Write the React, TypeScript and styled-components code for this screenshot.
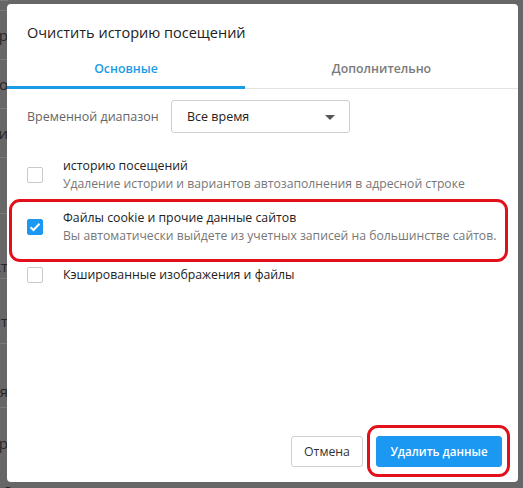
import React from "react";
import styled, { createGlobalStyle, css } from "styled-components";

const GlobalStyle = createGlobalStyle`
  html, body { margin: 0; padding: 0; }
  body {
    width: 523px;
    height: 488px;
    overflow: hidden;
    background: #676767;
    font-family: "Open Sans", "Noto Sans", sans-serif;
  }
`;

const Screen = styled.div`
  position: relative;
  width: 523px;
  height: 488px;
  overflow: hidden;
  background: #676767;
`;

const BackPage = styled.div`
  display: flex;
  flex-direction: column;
  width: 523px;
  height: 488px;
`;

const BackRow = styled.div<{ $h: number; $pad?: number }>`
  display: flex;
  align-items: center;
  height: ${(p) => p.$h}px;
  box-sizing: border-box;
  padding-top: ${(p) => p.$pad ?? 0}px;
  border-top: 1px solid #7a7a7a;
  width: 8px;
  overflow: hidden;
  justify-content: flex-end;
  white-space: nowrap;
  color: #262626;
  font-size: 15px;
`;

const BackFooter = styled.div`
  margin-top: auto;
  height: 6px;
  overflow: hidden;
  white-space: nowrap;
  color: #1e1e1e;
  font-size: 15px;
  line-height: 18px;
  padding-left: 2px;
`;

const Dialog = styled.div`
  position: absolute;
  left: 7px;
  top: 4px;
  width: 511px;
  height: 478px;
  background: #fff;
  border-radius: 4px;
  display: flex;
  flex-direction: column;
`;

const Title = styled.div`
  padding: 19px 20px 0;
  font-size: 14.5px;
  line-height: 20px;
  color: #222;
`;

const TabBar = styled.div`
  display: flex;
  margin-top: 7px;
  border-bottom: 1px solid #e2e2e2;
`;

const Tab = styled.div<{ $active?: boolean; $width?: number }>`
  ${(p) => (p.$width ? css`width: ${p.$width}px;` : css`flex: 1;`)}
  height: 39px;
  box-sizing: border-box;
  margin-bottom: -1px;
  display: flex;
  align-items: center;
  justify-content: center;
  font-size: 12.3px;
  font-weight: 600;
  color: ${(p) => (p.$active ? "#1a9be6" : "#7a7a7a")};
  border-bottom: 3px solid ${(p) => (p.$active ? "#1a9be6" : "transparent")};
`;

const RangeRow = styled.div`
  display: flex;
  align-items: center;
  margin-top: 11px;
  padding: 0 20px;
`;

const RangeLabel = styled.div`
  width: 144px;
  font-size: 12.5px;
  color: #666;
`;

const Select = styled.div`
  position: relative;
  width: 179px;
  height: 33px;
  box-sizing: border-box;
  border: 1px solid #cfcfcf;
  border-radius: 3px;
  display: flex;
  align-items: center;
  padding-left: 15px;
  font-size: 12.5px;
  color: #222;
`;

const Arrow = styled.span`
  position: absolute;
  right: 14px;
  top: 14px;
  width: 0;
  height: 0;
  border-left: 5px solid transparent;
  border-right: 5px solid transparent;
  border-top: 5px solid #555;
`;

const List = styled.div`
  display: flex;
  flex-direction: column;
  margin-top: 16px;
`;

const Row = styled.div<{ $padTop?: number; $highlight?: boolean }>`
  position: relative;
  display: flex;
  align-items: center;
  gap: 20px;
  padding: ${(p) => p.$padTop ?? 8}px 20px 8px;
  ${(p) =>
    p.$highlight &&
    css`
      &::after {
        content: "";
        position: absolute;
        left: 2px;
        right: 10px;
        top: -2px;
        bottom: -9px;
        border: 3px solid #e3101b;
        border-radius: 11px;
        pointer-events: none;
      }
    `}
`;

const Check = styled.span<{ $checked?: boolean }>`
  flex: none;
  width: 16px;
  height: 16px;
  box-sizing: border-box;
  border-radius: 2px;
  border: 1px solid ${(p) => (p.$checked ? "#1a98f2" : "#c9c9c9")};
  background: ${(p) => (p.$checked ? "#1a98f2" : "#fff")};
  display: flex;
  align-items: center;
  justify-content: center;
`;

const RowText = styled.div`
  display: flex;
  flex-direction: column;
  white-space: nowrap;
`;

const RowTitle = styled.div`
  font-size: 12.3px;
  line-height: 18px;
  color: #222;
`;

const RowSub = styled.div`
  font-size: 12.2px;
  line-height: 18px;
  color: #777;
`;

const Footer = styled.div`
  margin-top: auto;
  display: flex;
  justify-content: flex-end;
  gap: 13px;
  padding: 0 16px 15px;
`;

const Button = styled.button<{ $primary?: boolean; $width: number; $highlight?: boolean }>`
  position: relative;
  width: ${(p) => p.$width}px;
  height: 31px;
  box-sizing: border-box;
  border-radius: 3px;
  font-family: inherit;
  padding: 0;
  ${(p) =>
    p.$primary
      ? css`
          background: #1a98f2;
          border: 1px solid #1a98f2;
          color: #fff;
          font-weight: 600;
          font-size: 11.6px;
        `
      : css`
          background: #fff;
          border: 1px solid #d0d0d0;
          color: #333;
          font-size: 12.3px;
        `}
  ${(p) =>
    p.$highlight &&
    css`
      &::after {
        content: "";
        position: absolute;
        left: -10px;
        right: -9px;
        top: -12px;
        bottom: -11px;
        border: 3px solid #e3101b;
        border-radius: 11px;
        pointer-events: none;
      }
    `}
`;

const CheckMark = () => (
  <svg width="12" height="10" viewBox="0 0 12 10">
    <path d="M1.5 5.2 L4.5 8 L10.5 1.8" fill="none" stroke="#fff" strokeWidth="2" />
  </svg>
);

const backRows: { h: number; text: string; pad?: number }[] = [
  { h: 10, text: "" },
  { h: 49, text: "Центр" },
  { h: 49, text: "Фоно" },
  { h: 49, text: "Уведомлени" },
  { h: 56, text: "" },
  { h: 65, text: "Контакт", pad: 40 },
  { h: 65, text: "Сайт", pad: 20 },
  { h: 64, text: "Время", pad: 30 },
  { h: 60, text: "Пароли шифр", pad: 10 },
];

export default function App() {
  return (
    <>
      <GlobalStyle />
      <Screen>
        <BackPage>
          {backRows.map((r, i) => (
            <BackRow key={i} $h={r.h} $pad={r.pad}>
              {r.text}
            </BackRow>
          ))}
          <BackFooter>Определяет ли вспомогательные данные для повышения скорости</BackFooter>
        </BackPage>
        <Dialog>
          <Title>Очистить историю посещений</Title>
          <TabBar>
            <Tab $active $width={238}>Основные</Tab>
            <Tab>Дополнительно</Tab>
          </TabBar>
          <RangeRow>
            <RangeLabel>Временной диапазон</RangeLabel>
            <Select>
              Все время
              <Arrow />
            </Select>
          </RangeRow>
          <List>
            <Row>
              <Check />
              <RowText>
                <RowTitle>историю посещений</RowTitle>
                <RowSub>Удаление истории и вариантов автозаполнения в адресной строке</RowSub>
              </RowText>
            </Row>
            <Row $highlight>
              <Check $checked>
                <CheckMark />
              </Check>
              <RowText>
                <RowTitle>Файлы cookie и прочие данные сайтов</RowTitle>
                <RowSub>Вы автоматически выйдете из учетных записей на большинстве сайтов.</RowSub>
              </RowText>
            </Row>
            <Row $padTop={13}>
              <Check />
              <RowText>
                <RowTitle>Кэшированные изображения и файлы</RowTitle>
              </RowText>
            </Row>
          </List>
          <Footer>
            <Button $width={72}>Отмена</Button>
            <Button $primary $highlight $width={126}>
              Удалить данные
            </Button>
          </Footer>
        </Dialog>
      </Screen>
    </>
  );
}
